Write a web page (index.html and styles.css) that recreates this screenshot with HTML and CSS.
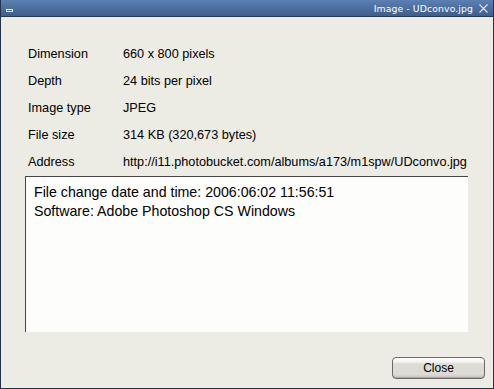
FILE: index.html
```html
<!DOCTYPE html>
<html>
<head>
<meta charset="utf-8">
<link rel="stylesheet" href="styles.css">
</head>
<body>
<div class="window">
  <div class="titlebar">
    <span class="minbtn"></span>
    <span class="title">Image - UDconvo.jpg</span>
    <svg class="closex" width="9" height="9" viewBox="0 0 9 9"><path d="M0.5 0.5 L8.5 8.5 M8.5 0.5 L0.5 8.5" stroke="#dfe6ef" stroke-width="1.1" fill="none"/></svg>
  </div>
  <div class="body">
    <div class="info">
      <div class="lbl">Dimension</div><div class="val">660 x 800 pixels</div>
      <div class="lbl">Depth</div><div class="val">24 bits per pixel</div>
      <div class="lbl">Image type</div><div class="val">JPEG</div>
      <div class="lbl">File size</div><div class="val">314 KB (320,673 bytes)</div>
      <div class="lbl">Address</div><div class="val">http://i11.photobucket.com/albums/a173/m1spw/UDconvo.jpg</div>
    </div>
    <div class="textbox">
      <div>File change date and time: 2006:06:02 11:56:51</div>
      <div>Software: Adobe Photoshop CS Windows</div>
    </div>
    <div class="buttons">
      <button class="btn">Close</button>
    </div>
  </div>
</div>
</body>
</html>
```
FILE: styles.css
```css
html, body {
  margin: 0;
  padding: 0;
  background: #ecebe4;
}
.window {
  width: 494px;
  height: 389px;
  box-sizing: border-box;
  border: 1px solid #22324a;
  border-top: none;
  display: flex;
  flex-direction: column;
  background: #ecebe4;
  font-family: "Liberation Sans", Arial, sans-serif;
}
.titlebar {
  height: 16px;
  flex: none;
  display: flex;
  align-items: center;
  background: linear-gradient(#5b80b3 0%, #4f72a3 40%, #3f5e8a 100%);
  border-bottom: 1px solid #263750;
  padding: 0 5px 0 4px;
  color: #ffffff;
}
.minbtn {
  width: 5px;
  height: 1px;
  border: 1px solid #e8eef6;
  margin-top: 4px;
  margin-left: 1px;
}
.title {
  margin-left: auto;
  font-family: "DejaVu Sans", sans-serif;
  font-size: 9.3px;
  letter-spacing: 0.1px;
}
.closex {
  margin-left: 6px;
}
.body {
  flex: 1;
  display: flex;
  flex-direction: column;
  padding: 0 25px 0 24px;
}
.info {
  display: grid;
  grid-template-columns: 95px 1fr;
  grid-auto-rows: 14px;
  row-gap: 13px;
  margin-top: 30px;
  font-size: 12.7px;
  line-height: 14px;
  color: #000;
  padding-left: 3px;
}
.lbl, .val {
  white-space: nowrap;
}
.textbox {
  margin-top: 7px;
  height: 156px;
  background: #fdfdfb;
  border-top: 1px solid #454545;
  border-left: 1px solid #454545;
  box-sizing: border-box;
  padding: 6px 8px;
  font-size: 14.2px;
  line-height: 19px;
  color: #000;
}
.buttons {
  display: flex;
  justify-content: flex-end;
  margin-top: 25px;
  margin-right: -17px;
}
.btn {
  width: 93px;
  height: 22px;
  border: 1px solid #6b6b66;
  border-radius: 4px;
  background: linear-gradient(#ffffff 0%, #f3f2ee 20%, #dcdbd4 30%, #dcdbd4 80%, #c8c7c0 100%);
  box-shadow: inset 0 -1px 0 #a9a8a1;
  font-family: "Liberation Sans", Arial, sans-serif;
  font-size: 12px;
  color: #000;
  padding: 0;
}
```
